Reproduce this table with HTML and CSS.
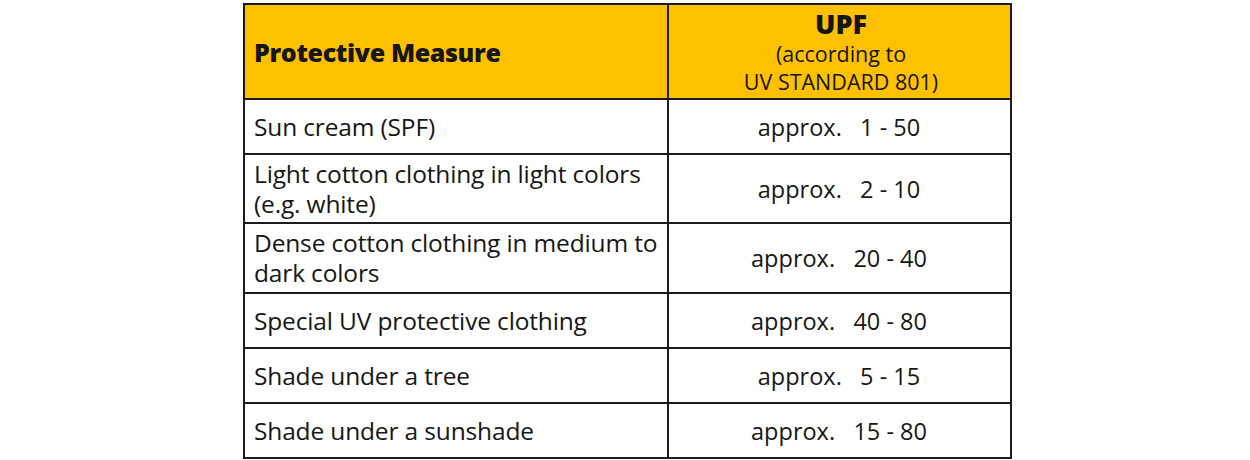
FILE: index.html
```html
<!DOCTYPE html>
<html>
<head>
<meta charset="utf-8">
<link rel="stylesheet" href="styles.css">
</head>
<body>
<div class="page">
<table class="upf">
  <colgroup><col class="c1"><col class="c2"></colgroup>
  <thead>
    <tr class="head">
      <th class="measure">Protective Measure</th>
      <th class="value"><span class="upf-title">UPF</span><br>(according to<br>UV STANDARD 801)</th>
    </tr>
  </thead>
  <tbody>
    <tr class="r55"><td class="txt">Sun cream (SPF)</td><td class="num">approx.   1 - 50</td></tr>
    <tr class="r69"><td class="txt">Light cotton clothing in light colors<br>(e.g. white)</td><td class="num">approx.   2 - 10</td></tr>
    <tr class="r70"><td class="txt">Dense cotton clothing in medium to<br>dark colors</td><td class="num">approx.   20 - 40</td></tr>
    <tr class="r55"><td class="txt">Special UV protective clothing</td><td class="num">approx.   40 - 80</td></tr>
    <tr class="r55"><td class="txt">Shade under a tree</td><td class="num">approx.   5 - 15</td></tr>
    <tr class="r55"><td class="txt">Shade under a sunshade</td><td class="num">approx.   15 - 80</td></tr>
  </tbody>
</table>
</div>
</body>
</html>
```
FILE: styles.css
```css
html, body {
  margin: 0;
  padding: 0;
  background: #ffffff;
}
.page {
  padding: 3px 0 0 243px;
}
.upf {
  border-collapse: collapse;
  table-layout: fixed;
  width: 767px;
  font-family: "Open Sans", "Noto Sans", sans-serif;
  color: #161616;
  font-size: 24.5px;
  line-height: 30px;
}
.c1 { width: 424px; }
.c2 { width: 343px; }
.upf th, .upf td {
  border: 2px solid #1c1c1c;
  padding: 0 6px 0 9px;
}
.head {
  height: 95px;
  background: #ffc000;
}
.measure {
  text-align: left;
  font-weight: 800;
  font-size: 25px;
  letter-spacing: -0.35px;
}
.value {
  text-align: center;
  font-weight: 400;
  font-size: 21.5px;
  line-height: 28px;
  padding-top: 2px !important;
}
.upf-title {
  font-weight: 800;
  font-size: 27px;
}
.r55 { height: 55px; }
.r69 { height: 69px; }
.r70 { height: 70px; }
.txt {
  white-space: nowrap;
  letter-spacing: -0.15px;
}
.num {
  text-align: center;
  white-space: pre;
  font-size: 23.5px;
  padding-right: 10px !important;
}
```
